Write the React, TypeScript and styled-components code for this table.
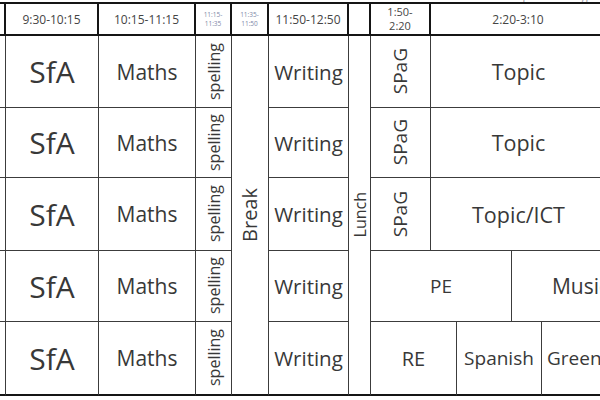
import React from "react";
import styled, {createGlobalStyle} from "styled-components";

const GlobalStyle = createGlobalStyle`
  html, body {
    margin: 0;
    padding: 0;
    background: #fff;
  }
  body {
    font-family: "Open Sans", "DejaVu Sans", sans-serif;
    color: #383838;
  }
`

const Page = styled.div`
  width: 600px;
  height: 400px;
  overflow: hidden;
  background: #fff;
`

const NoteStrip = styled.div`
  height: 2px;
  overflow: hidden;
  display: flex;
  justify-content: flex-end;
  gap: 6px;
  padding-right: 6px;
  width: 600px;
  box-sizing: border-box;
`

const NoteText = styled.span<{ $accent?: boolean }>`
  margin-top: -10px;
  font-size: 11px;
  line-height: 11px;
  color: ${p => p.$accent ? "#e8833a" : "#9a9aa6"};
  white-space: nowrap;
`

const Grid = styled.div`
  display: grid;
  grid-template-columns: 6px 93px 97px 36px 37px 80px 22px 60px 26px 55px 30px 65px 43px 50px;
  grid-template-rows: 34px 72px 70px 73px 71px 74px;
  width: 700px;
`

const HeadCell = styled.div<{ $col: string }>`
  grid-column: ${p => p.$col};
  grid-row: 1;
  display: flex;
  align-items: center;
  justify-content: center;
  text-align: center;
  border-top: 2px solid #151515;
  border-bottom: 2px solid #151515;
  border-right: 2px solid #151515;
  font-size: 12px;
  color: #454545;
  line-height: 13px;
`

const StackedTime = styled.span`
  font-size: 11px;
  line-height: 14px;
`

const TinyTime = styled.span`
  font-size: 6.5px;
  line-height: 9px;
  color: #8189a8;
`

const Cell = styled.div<{ $col: string; $row: string; $last?: boolean; $align?: string }>`
  grid-column: ${p => p.$col};
  grid-row: ${p => p.$row};
  display: flex;
  align-items: center;
  justify-content: ${p => p.$align || "center"};
  overflow: hidden;
  border-right: 1px solid #3c3c3c;
  border-bottom: ${p => p.$last ? "2px solid #151515" : "1px solid #3c3c3c"};
`

const Label = styled.span<{ $size: number; $pad?: number }>`
  font-size: ${p => p.$size}px;
  white-space: nowrap;
  padding-left: ${p => p.$pad || 0}px;
  color: #383838;
`

const Vertical = styled.span<{ $size: number }>`
  font-size: ${p => p.$size}px;
  writing-mode: vertical-rl;
  transform: rotate(180deg);
  white-space: nowrap;
  line-height: 1;
  color: #383838;
`

const rows = [2, 3, 4, 5, 6]

const App: React.FC = () => {
    return <Page>
        <GlobalStyle/>
        <NoteStrip>
            <NoteText $accent>*</NoteText>
            <NoteText>Timetable subject to change</NoteText>
        </NoteStrip>
        <Grid>
            <HeadCell $col="1"/>
            <HeadCell $col="2">9:30-10:15</HeadCell>
            <HeadCell $col="3">10:15-11:15</HeadCell>
            <HeadCell $col="4"><TinyTime>11:15-<br/>11:35</TinyTime></HeadCell>
            <HeadCell $col="5"><TinyTime>11:35-<br/>11:50</TinyTime></HeadCell>
            <HeadCell $col="6">11:50-12:50</HeadCell>
            <HeadCell $col="7"/>
            <HeadCell $col="8"><StackedTime>1:50-<br/>2:20</StackedTime></HeadCell>
            <HeadCell $col="9 / 13">2:20-3:10</HeadCell>
            <HeadCell $col="13 / 15"/>

            {rows.map(r => {
                const last = r === 6
                return <React.Fragment key={r}>
                    <Cell $col="1" $row={`${r}`} $last={last}/>
                    <Cell $col="2" $row={`${r}`} $last={last}><Label $size={30}>SfA</Label></Cell>
                    <Cell $col="3" $row={`${r}`} $last={last}><Label $size={21}>Maths</Label></Cell>
                    <Cell $col="4" $row={`${r}`} $last={last}><Vertical $size={16}>spelling</Vertical></Cell>
                    <Cell $col="6" $row={`${r}`} $last={last}><Label $size={20.5}>Writing</Label></Cell>
                </React.Fragment>
            })}

            <Cell $col="5" $row="2 / 7" $last><Vertical $size={20}>Break</Vertical></Cell>
            <Cell $col="7" $row="2 / 7" $last><Vertical $size={16}>Lunch</Vertical></Cell>

            <Cell $col="8" $row="2"><Vertical $size={19}>SPaG</Vertical></Cell>
            <Cell $col="9 / 13" $row="2"><Label $size={21.5}>Topic</Label></Cell>
            <Cell $col="13 / 15" $row="2"/>
            <Cell $col="8" $row="3"><Vertical $size={19}>SPaG</Vertical></Cell>
            <Cell $col="9 / 13" $row="3"><Label $size={21.5}>Topic</Label></Cell>
            <Cell $col="13 / 15" $row="3"/>
            <Cell $col="8" $row="4"><Vertical $size={19}>SPaG</Vertical></Cell>
            <Cell $col="9 / 13" $row="4"><Label $size={21.5}>Topic/ICT</Label></Cell>
            <Cell $col="13 / 15" $row="4"/>

            <Cell $col="8 / 11" $row="5"><Label $size={19}>PE</Label></Cell>
            <Cell $col="11 / 14" $row="5"><Label $size={21}>Music</Label></Cell>
            <Cell $col="14" $row="5"/>

            <Cell $col="8 / 10" $row="6" $last><Label $size={20}>RE</Label></Cell>
            <Cell $col="10 / 12" $row="6" $last><Label $size={19}>Spanish</Label></Cell>
            <Cell $col="12 / 15" $row="6" $last $align="flex-start"><Label $size={19} $pad={5}>Green Team</Label></Cell>
        </Grid>
    </Page>
}

export default App;
